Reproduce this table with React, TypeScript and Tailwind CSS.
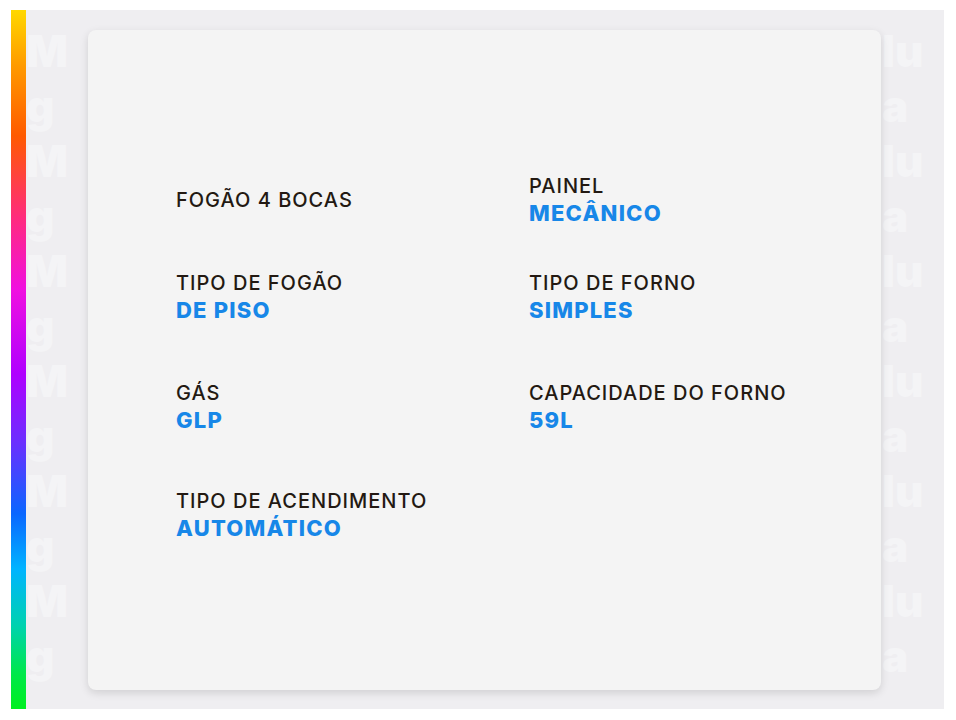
import React from "react";

const items: { label: string; value?: string }[][] = [
  [{ label: "FOGÃO 4 BOCAS" }, { label: "PAINEL", value: "MECÂNICO" }],
  [
    { label: "TIPO DE FOGÃO", value: "DE PISO" },
    { label: "TIPO DE FORNO", value: "SIMPLES" },
  ],
  [
    { label: "GÁS", value: "GLP" },
    { label: "CAPACIDADE DO FORNO", value: "59L" },
  ],
  [{ label: "TIPO DE ACENDIMENTO", value: "AUTOMÁTICO" }, { label: "" }],
];

const rowHeights = ["h-[100px]", "h-[94px]", "h-[126px]", "h-[90px]"];

function Cell({ label, value }: { label: string; value?: string }) {
  return (
    <div className="flex flex-col justify-center">
      {label && (
        <div className="text-[20px] leading-[27px] font-medium text-[#231912] tracking-[1px]">
          {label}
        </div>
      )}
      {value && (
        <div className="text-[22px] leading-[27px] font-extrabold text-[#1787e8] tracking-[1.2px]">
          {value}
        </div>
      )}
    </div>
  );
}

function Strip({ words }: { words: string[] }) {
  return (
    <div className="w-[62px] h-full overflow-hidden flex flex-col pt-[14px] select-none">
      {words.map((w, i) => (
        <div
          key={i}
          className="h-[55px] text-[44px] leading-[55px] font-black text-[#f4f4f6] whitespace-nowrap overflow-hidden"
        >
          {w}
        </div>
      ))}
    </div>
  );
}

export default function App() {
  const left = Array.from({ length: 12 }, (_, i) => (i % 2 === 0 ? "M" : "g"));
  const right = Array.from({ length: 12 }, (_, i) => (i % 2 === 0 ? "lu" : "a"));
  return (
    <div
      className="w-[956px] h-[720px] bg-white pt-[10px] pl-[11px]"
      style={{ fontFamily: "Inter, 'Liberation Sans', sans-serif" }}
    >
      <div className="w-[933px] h-[699px] flex bg-[#efeef1]">
        <div className="w-[15px] h-full bg-[linear-gradient(to_bottom,#ffd800_0%,#ff9a00_8%,#ff5a00_18%,#ff2a80_30%,#f010e0_40%,#b000ff_52%,#6a30ff_62%,#0a66ff_72%,#00b4ff_80%,#00d2b0_88%,#00e84a_95%,#00f020_100%)]" />
        <Strip words={left} />
        <div className="relative mt-[20px] w-[793px] h-[660px] bg-[#f4f4f4] rounded-[8px] shadow-[0_3px_8px_rgba(0,0,0,0.13)] pl-[88px] pt-[120px]">
          {items.map((row, r) => (
            <div key={r} className={"grid grid-cols-[353px_1fr] " + rowHeights[r]}>
              {row.map((c, k) => (
                <Cell key={k} label={c.label} value={c.value} />
              ))}
            </div>
          ))}
        </div>
        <div className="ml-[1px]">
          <Strip words={right} />
        </div>
      </div>
    </div>
  );
}
